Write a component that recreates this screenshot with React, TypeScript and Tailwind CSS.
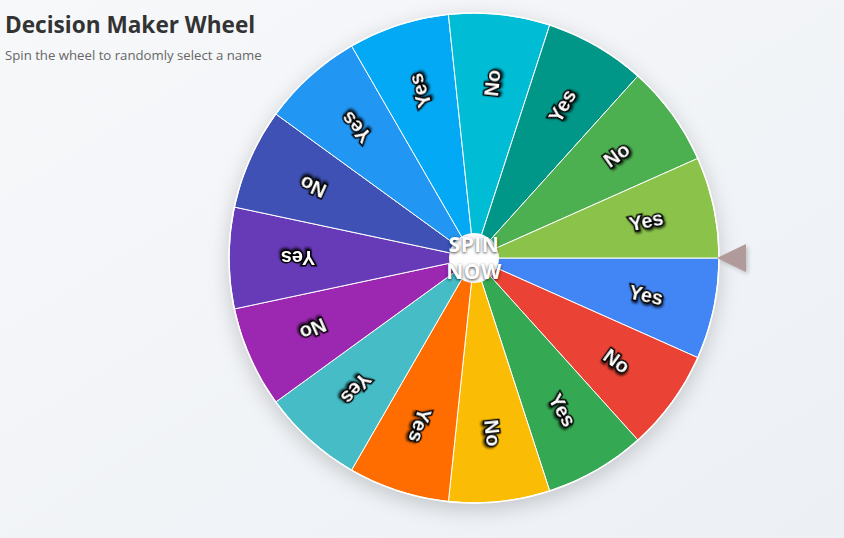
import React from "react";

const segments = [
  { label: "Yes", color: "#4285F4" },
  { label: "No", color: "#EA4335" },
  { label: "Yes", color: "#34A853" },
  { label: "No", color: "#FBBC05" },
  { label: "Yes", color: "#FF6D00" },
  { label: "Yes", color: "#46BDC6" },
  { label: "No", color: "#9C27B0" },
  { label: "Yes", color: "#673AB7" },
  { label: "No", color: "#3F51B5" },
  { label: "Yes", color: "#2196F3" },
  { label: "Yes", color: "#03A9F4" },
  { label: "No", color: "#00BCD4" },
  { label: "Yes", color: "#009688" },
  { label: "No", color: "#4CAF50" },
  { label: "Yes", color: "#8BC34A" },
];

const R = 245;
const C = 247;
const step = 360 / segments.length;

const pt = (deg: number, r: number) => {
  const a = (deg * Math.PI) / 180;
  return [C + r * Math.cos(a), C + r * Math.sin(a)];
};

const Wheel = () => (
  <svg width={494} height={494} viewBox="0 0 494 494" className="drop-shadow-[0_6px_10px_rgba(0,0,0,0.18)]">
    {segments.map((s, i) => {
      const [x1, y1] = pt(i * step, R);
      const [x2, y2] = pt((i + 1) * step, R);
      return (
        <path
          key={i}
          d={`M${C},${C} L${x1},${y1} A${R},${R} 0 0 1 ${x2},${y2} Z`}
          fill={s.color}
          stroke="#ffffff"
          strokeWidth={1}
        />
      );
    })}
    <circle cx={C} cy={C} r={R} fill="none" stroke="#ffffff" strokeWidth={1.5} />
    {segments.map((s, i) => {
      const mid = i * step + step / 2;
      const [tx, ty] = pt(mid, 176);
      return (
        <text
          key={`t${i}`}
          x={tx}
          y={ty}
          transform={`rotate(${mid} ${tx} ${ty})`}
          textAnchor="middle"
          dominantBaseline="central"
          fill="#ffffff"
          stroke="#000000"
          strokeWidth={3}
          paintOrder="stroke"
          className="font-['Liberation_Sans',Arial,sans-serif] font-bold text-[20px] drop-shadow-[1px_2px_1px_rgba(0,0,0,0.7)]"
        >
          {s.label}
        </text>
      );
    })}
    <circle cx={C} cy={C} r={25} fill="#ffffff" />
  </svg>
);

export default function App() {
  return (
    <div className="w-[844px] h-[538px] overflow-hidden bg-gradient-to-br from-[#f7f8fa] to-[#ecf0f5] flex items-start font-['Open_Sans','Noto_Sans',sans-serif]">
      <div className="w-[229px] shrink-0 pl-[5px] pt-[10px] whitespace-nowrap">
        <h1 className="text-[22.6px] font-bold text-[#333333] leading-[30px]">Decision Maker Wheel</h1>
        <p className="text-[13.2px] text-[#666666] mt-[6px] leading-[18px]">Spin the wheel to randomly select a name</p>
      </div>
      <div className="mt-[11px] -ml-[2px] flex items-center">
        <div className="relative">
          <Wheel />
          <div className="absolute inset-0 flex items-center justify-center">
            <p className="text-center text-white font-bold text-[21px] tracking-[0.5px] leading-[27px] [text-shadow:0_1px_3px_rgba(0,0,0,0.75)]">
              SPIN
              <br />
              NOW
            </p>
          </div>
        </div>
        <svg width={32} height={30} viewBox="0 0 32 30" className="-ml-[5px] drop-shadow-[2px_2px_2px_rgba(0,0,0,0.2)]">
          <polygon points="1,15 30,1 30,29" fill="#B09A9A" />
        </svg>
      </div>
    </div>
  );
}
